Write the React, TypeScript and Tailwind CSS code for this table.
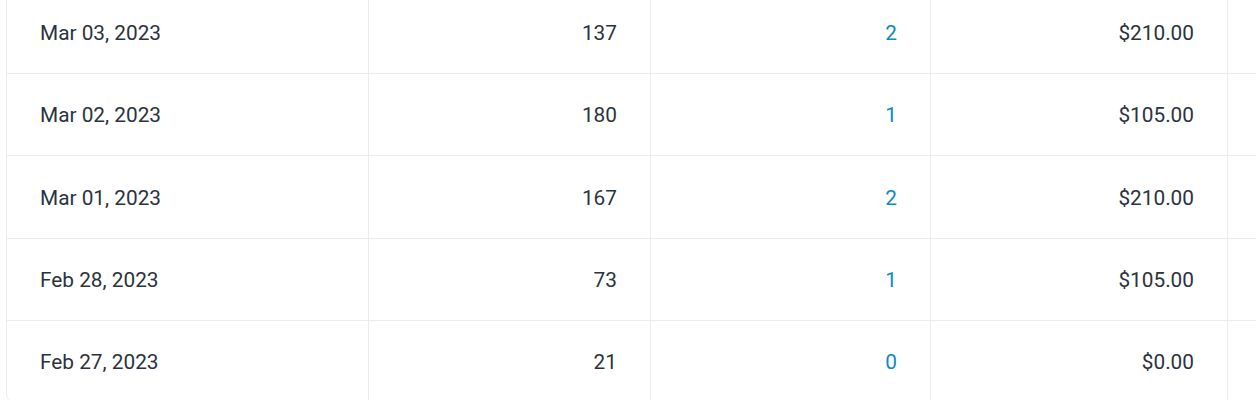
const rows = [
  { date: "Mar 03, 2023", visits: 137, orders: 2, total: "$210.00" },
  { date: "Mar 02, 2023", visits: 180, orders: 1, total: "$105.00" },
  { date: "Mar 01, 2023", visits: 167, orders: 2, total: "$210.00" },
  { date: "Feb 28, 2023", visits: 73, orders: 1, total: "$105.00" },
  { date: "Feb 27, 2023", visits: 21, orders: 0, total: "$0.00" },
]

export default function App() {
  return (
    <div className="h-[400px] overflow-hidden bg-white font-['Roboto',sans-serif]">
      <div className="ml-[6px] -mt-[10px] w-[1320px] border border-[#ececec] rounded-lg bg-white text-[20.8px] text-[#2b3340]">
        {rows.map((r, i) => {
          const last = i === rows.length - 1
          return (
            <div
              key={r.date}
              className={`flex ${last ? "h-[79.5px]" : "h-[82.5px] border-b border-[#ececec]"}`}
            >
              {/* date */}
              <div className="w-[362px] flex items-center pt-[3px] px-[33px] border-r border-[#ececec]">
                {r.date}
              </div>
              <div className="w-[282px] flex items-center justify-end pt-[3px] px-[33px] border-r border-[#ececec]">
                {r.visits}
              </div>
              <div className="w-[280px] flex items-center justify-end pt-[3px] px-[33px] border-r border-[#ececec] text-[#0b8bc2]">
                {r.orders}
              </div>
              <div className="w-[297px] flex items-center justify-end pt-[3px] px-[33px] border-r border-[#ececec]">
                {r.total}
              </div>
              <div className="flex-1" />
            </div>
          )
        })}
      </div>
    </div>
  )
}
